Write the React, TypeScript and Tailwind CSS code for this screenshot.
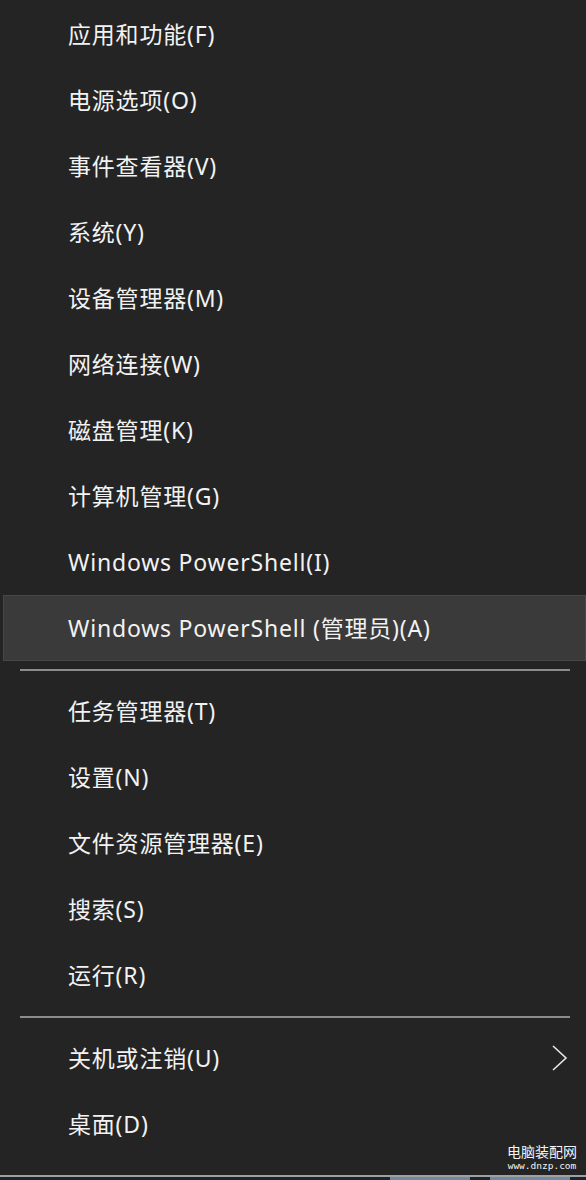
const topItems = [
  "应用和功能(F)",
  "电源选项(O)",
  "事件查看器(V)",
  "系统(Y)",
  "设备管理器(M)",
  "网络连接(W)",
  "磁盘管理(K)",
  "计算机管理(G)",
  "Windows PowerShell(I)",
  "Windows PowerShell (管理员)(A)",
];

const midItems = ["任务管理器(T)", "设置(N)", "文件资源管理器(E)", "搜索(S)", "运行(R)"];

function MenuItem(props: { label: string; active?: boolean; submenu?: boolean }) {
  return (
    <div
      className={
        "flex h-[66px] items-center justify-between pr-[17px] " +
        (props.active ? "ml-[3px] border border-[#474747] bg-[#3a3a3a] pl-[64px]" : "pl-[68px]")
      }
    >
      <span className="text-[23px] leading-none tracking-[0.8px] text-[#f2f2f2]">{props.label}</span>
      {props.submenu && (
        <svg width="18" height="28" viewBox="0 0 18 28" fill="none">
          <path d="M2 2 L15 14 L2 26" stroke="#e8e8e8" strokeWidth="1.6" />
        </svg>
      )}
    </div>
  );
}

function Separator() {
  return (
    <div className="flex h-[17px] items-center pl-[20px] pr-[16px]">
      <div className="h-[2px] w-full bg-[#8c8c8c]" />
    </div>
  );
}

export default function App() {
  return (
    <div
      className="relative flex h-[1180px] w-[586px] flex-col bg-[#242424] pt-[1px]"
      style={{ fontFamily: '"Noto Sans", "Noto Sans CJK SC", sans-serif' }}
    >
      {topItems.map((item, i) => (
        <MenuItem key={item} label={item} active={i === 9} />
      ))}
      <Separator />
      {midItems.map(item => (
        <MenuItem key={item} label={item} />
      ))}
      <Separator />
      <MenuItem label="关机或注销(U)" submenu />
      <MenuItem label="桌面(D)" />
      <div className="flex-1" />
      <div className="h-[2px] bg-[#a0a0a0]" />
      <div className="flex h-[3px] bg-[#1c2430]">
        <div className="w-[390px]" />
        <div className="w-[80px] bg-[#6f8aa0]" />
        <div className="w-[20px]" />
        <div className="w-[80px] bg-[#6f8aa0]" />
      </div>
      <div className="absolute right-[9px] bottom-[8px] flex flex-col items-center text-[#f4f4f4]">
        <span className="text-[14px] leading-[18px]" style={{ fontFamily: '"Noto Sans CJK SC", sans-serif' }}>
          电脑装配网
        </span>
        <span className="text-[9.5px] leading-[12px]" style={{ fontFamily: '"DejaVu Sans Mono", monospace' }}>
          www.dnzp.com
        </span>
      </div>
    </div>
  );
}
